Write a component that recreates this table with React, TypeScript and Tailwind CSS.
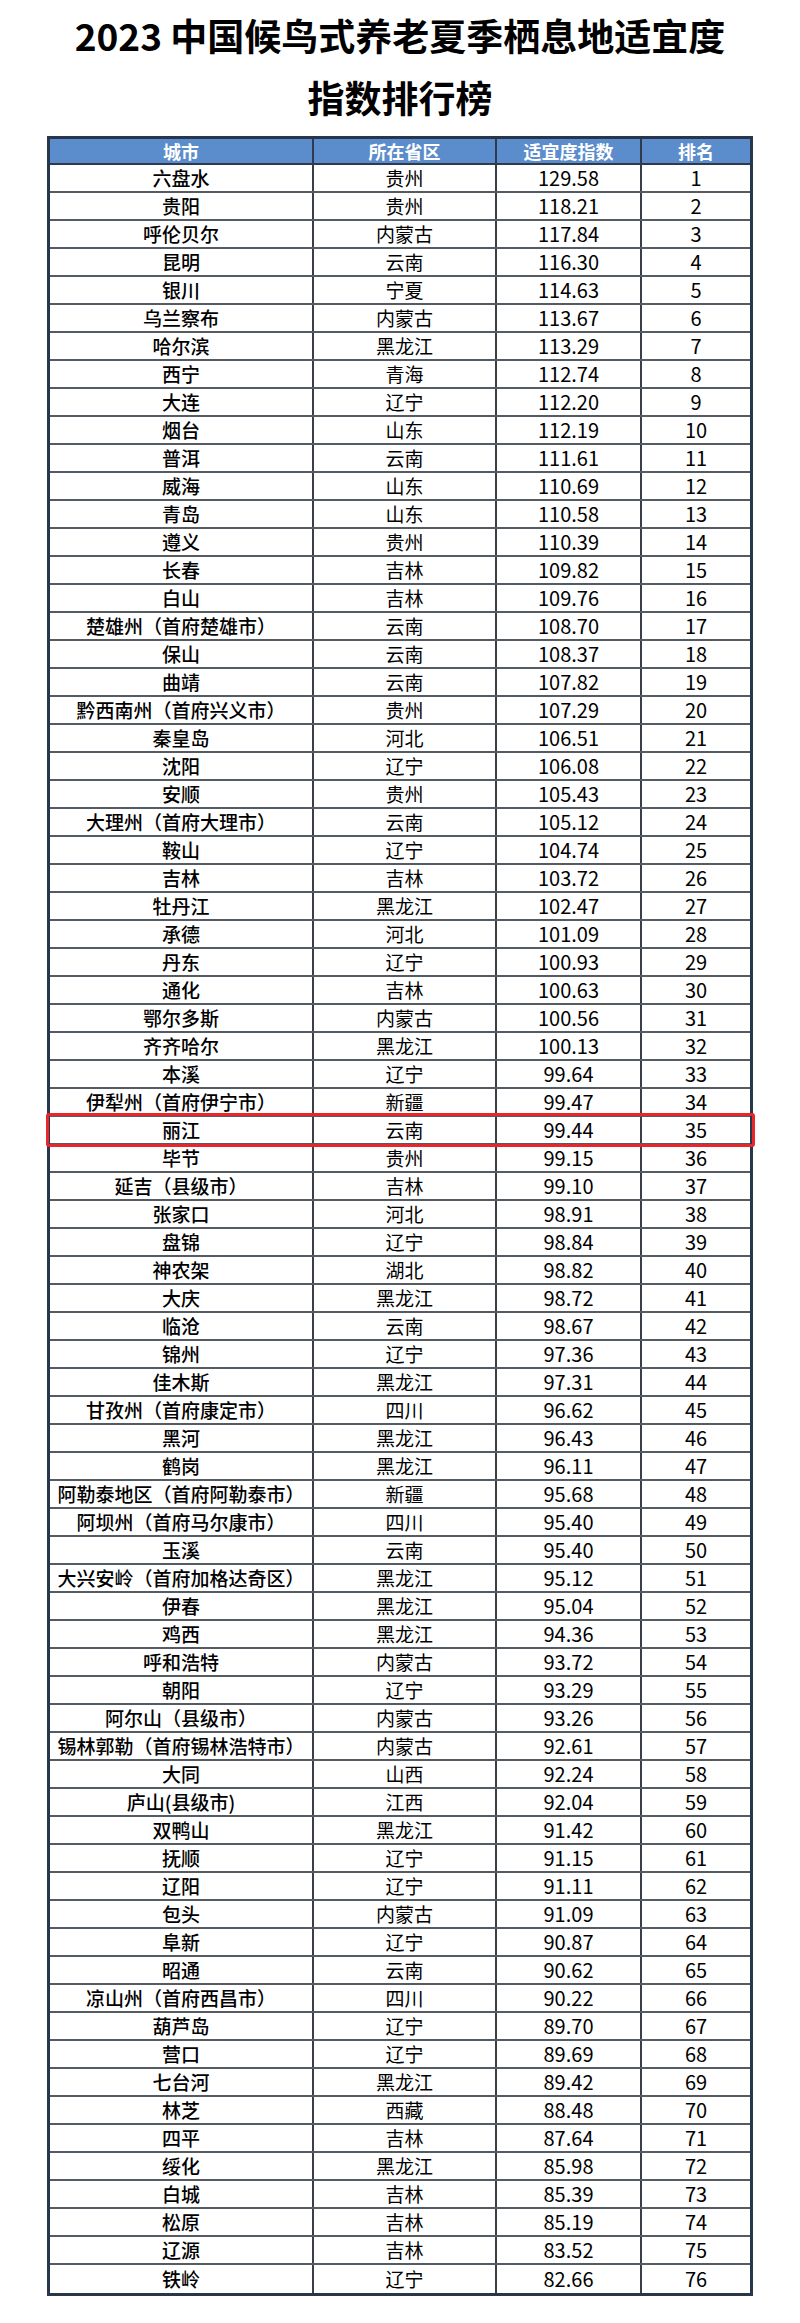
import React from "react";

const rows: [string, string, string][] = [
  ["六盘水", "贵州", "129.58"],
  ["贵阳", "贵州", "118.21"],
  ["呼伦贝尔", "内蒙古", "117.84"],
  ["昆明", "云南", "116.30"],
  ["银川", "宁夏", "114.63"],
  ["乌兰察布", "内蒙古", "113.67"],
  ["哈尔滨", "黑龙江", "113.29"],
  ["西宁", "青海", "112.74"],
  ["大连", "辽宁", "112.20"],
  ["烟台", "山东", "112.19"],
  ["普洱", "云南", "111.61"],
  ["威海", "山东", "110.69"],
  ["青岛", "山东", "110.58"],
  ["遵义", "贵州", "110.39"],
  ["长春", "吉林", "109.82"],
  ["白山", "吉林", "109.76"],
  ["楚雄州（首府楚雄市）", "云南", "108.70"],
  ["保山", "云南", "108.37"],
  ["曲靖", "云南", "107.82"],
  ["黔西南州（首府兴义市）", "贵州", "107.29"],
  ["秦皇岛", "河北", "106.51"],
  ["沈阳", "辽宁", "106.08"],
  ["安顺", "贵州", "105.43"],
  ["大理州（首府大理市）", "云南", "105.12"],
  ["鞍山", "辽宁", "104.74"],
  ["吉林", "吉林", "103.72"],
  ["牡丹江", "黑龙江", "102.47"],
  ["承德", "河北", "101.09"],
  ["丹东", "辽宁", "100.93"],
  ["通化", "吉林", "100.63"],
  ["鄂尔多斯", "内蒙古", "100.56"],
  ["齐齐哈尔", "黑龙江", "100.13"],
  ["本溪", "辽宁", "99.64"],
  ["伊犁州（首府伊宁市）", "新疆", "99.47"],
  ["丽江", "云南", "99.44"],
  ["毕节", "贵州", "99.15"],
  ["延吉（县级市）", "吉林", "99.10"],
  ["张家口", "河北", "98.91"],
  ["盘锦", "辽宁", "98.84"],
  ["神农架", "湖北", "98.82"],
  ["大庆", "黑龙江", "98.72"],
  ["临沧", "云南", "98.67"],
  ["锦州", "辽宁", "97.36"],
  ["佳木斯", "黑龙江", "97.31"],
  ["甘孜州（首府康定市）", "四川", "96.62"],
  ["黑河", "黑龙江", "96.43"],
  ["鹤岗", "黑龙江", "96.11"],
  ["阿勒泰地区（首府阿勒泰市）", "新疆", "95.68"],
  ["阿坝州（首府马尔康市）", "四川", "95.40"],
  ["玉溪", "云南", "95.40"],
  ["大兴安岭（首府加格达奇区）", "黑龙江", "95.12"],
  ["伊春", "黑龙江", "95.04"],
  ["鸡西", "黑龙江", "94.36"],
  ["呼和浩特", "内蒙古", "93.72"],
  ["朝阳", "辽宁", "93.29"],
  ["阿尔山（县级市）", "内蒙古", "93.26"],
  ["锡林郭勒（首府锡林浩特市）", "内蒙古", "92.61"],
  ["大同", "山西", "92.24"],
  ["庐山(县级市)", "江西", "92.04"],
  ["双鸭山", "黑龙江", "91.42"],
  ["抚顺", "辽宁", "91.15"],
  ["辽阳", "辽宁", "91.11"],
  ["包头", "内蒙古", "91.09"],
  ["阜新", "辽宁", "90.87"],
  ["昭通", "云南", "90.62"],
  ["凉山州（首府西昌市）", "四川", "90.22"],
  ["葫芦岛", "辽宁", "89.70"],
  ["营口", "辽宁", "89.69"],
  ["七台河", "黑龙江", "89.42"],
  ["林芝", "西藏", "88.48"],
  ["四平", "吉林", "87.64"],
  ["绥化", "黑龙江", "85.98"],
  ["白城", "吉林", "85.39"],
  ["松原", "吉林", "85.19"],
  ["辽源", "吉林", "83.52"],
  ["铁岭", "辽宁", "82.66"],
];

const font = { fontFamily: '"Noto Sans CJK SC", "Noto Sans", sans-serif' };

export default function App() {
  return (
    <div className="w-[800px] min-h-[2323px] bg-white text-black" style={font}>
      <div className="pt-[4px] text-center text-[37px] font-bold leading-[62px] tracking-[0px]">
        <div>2023 中国候鸟式养老夏季栖息地适宜度</div>
        <div>指数排行榜</div>
      </div>
      <div className="relative mt-[8px] ml-[47px] w-[706px] border-[3px] border-[#27364b]">
        <div className="grid h-[26px] grid-cols-[264px_183px_145px_108px] border-b-2 border-[#2f3b4c] bg-[#5b8ccb] text-[18px] font-bold leading-[24px] text-white">
          <div className="flex items-center justify-center border-r-2 border-[#2f3b4c]">城市</div>
          <div className="flex items-center justify-center border-r-2 border-[#2f3b4c]">所在省区</div>
          <div className="flex items-center justify-center border-r-2 border-[#2f3b4c]">适宜度指数</div>
          <div className="flex items-center justify-center">排名</div>
        </div>
        {rows.map(([city, prov, score], i) => (
          <div
            key={i}
            className={
              "grid h-[28px] grid-cols-[264px_183px_145px_108px] text-[19px] leading-[26px] " +
              (i < rows.length - 1 ? "border-b-2 border-[#555b63]" : "")
            }
          >
            <div className="flex items-center justify-center whitespace-nowrap border-r-2 border-[#3a3f47] font-medium">
              {city}
            </div>
            <div className="flex items-center justify-center border-r-2 border-[#3a3f47]">{prov}</div>
            <div className="flex items-center justify-center border-r-2 border-[#3a3f47] text-[20px]">{score}</div>
            <div className="flex items-center justify-center text-[20px]">{i + 1}</div>
          </div>
        ))}
        <div className="pointer-events-none absolute left-[-4px] top-[974px] h-[34px] w-[709px] rounded-[3px] border-[3px] border-[#e8262b]" />
      </div>
    </div>
  );
}
